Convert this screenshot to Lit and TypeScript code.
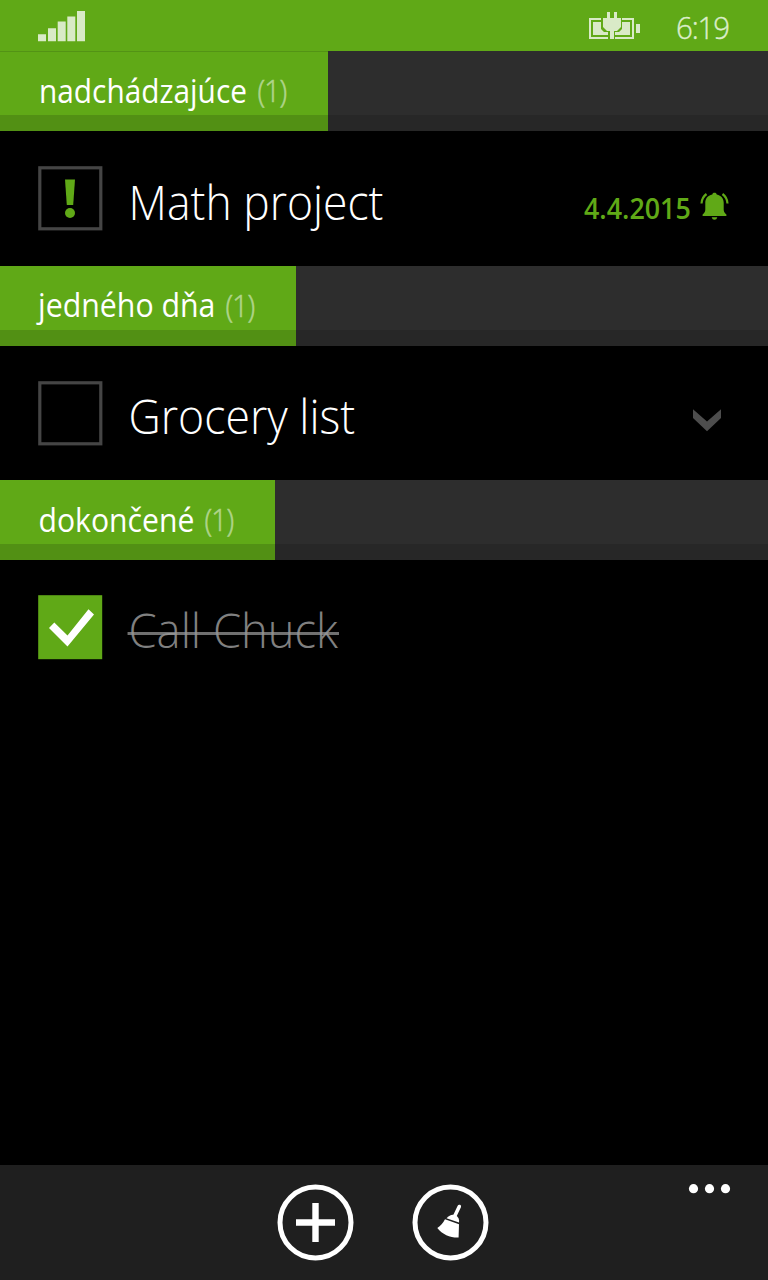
import { LitElement, html, css, svg } from "lit";
import { customElement, property } from "lit/decorators.js";

@customElement("status-bar")
class StatusBar extends LitElement {
  static styles = css`
    :host { display: flex; height: 51.2px; background: #60a917; }
    .signal { display: block; margin: 11px 0 0 38px; }
    .battery { display: block; margin: 12px 0 0 auto; }
    .clock {
      width: 54px; margin: 6px 38px 0 35px; white-space: nowrap;
      transform: scaleX(0.92); transform-origin: 0 0; -webkit-text-stroke: 0.4px #dceecb;
      font: 300 32px/42px "Open Sans", sans-serif; letter-spacing: -1.2px; color: #dceecb;
    }
  `;
  render() {
    return html`
      <svg class="signal" width="48" height="31" fill="#d9eac7">
        <path d="M0 23.3h8v7H0zM10 17.3h8v13h-8zM19.7 10.5h8v19.8h-8zM29.3 5.5h8v24.8h-8zM39 0h8v30.3h-8z" />
      </svg>
      <svg class="battery" width="52" height="28" fill="#d9eac7">
        <path d="M0 6h12v2H2v17h17v2H0zM33 6h12v21H26v-2h17V8H33z" />
        <path d="M4 10h8v7l3 3h4v3H4zM41 10h-8v7l-3 3h-4v3h15z" />
        <path d="M14 6h4V0h3v6h4V0h3v6h4v9l-4 4h-3v8h-4v-8h-3l-4-4z" />
        <path d="M47 12h4v9h-4z" />
      </svg>
      <div class="clock">6:19</div>
    `;
  }
}

@customElement("group-header")
class GroupHeader extends LitElement {
  @property() name = "";
  @property() kind = "";
  @property({ type: Number }) count = 0;
  static styles = css`
    :host { display: block; }
    .bar { display: flex; height: 80px; background: linear-gradient(#2d2d2d 0 64px, #272727 64px); }
    .tab {
      display: flex; box-sizing: border-box; height: 80px; padding: 19px 0 0 38px; white-space: nowrap;
      font: 400 32px/42px "Open Sans", sans-serif; color: #fff;
      background: linear-gradient(#60a917 0 64px, #529014 64px);
    }
    .name, .count { flex: none; transform-origin: 0 0; }
    .count {
      font-weight: 300; color: #b0d58c; letter-spacing: -1px;
      -webkit-text-stroke: 0.6px #b0d58c; transform: translate(0.5px, -1px) scaleX(0.88);
    }
    .upcoming .tab { width: 328px; box-shadow: inset 0 1px #539315; }
    .upcoming .name { width: 218.5px; transform: translateX(1px) scaleX(0.932); }
    .someday .tab { width: 296px; }
    .someday .name { width: 186.5px; transform: translateY(-0.6px) scaleX(0.947); }
    .done .tab { width: 275px; }
    .done .name { width: 165.5px; transform: translateX(0.5px) scaleX(0.942); }
  `;
  render() {
    return html`<div class="bar ${this.kind}">
      <div class="tab"><span class="name">${this.name}</span><span class="count">(${this.count})</span></div>
    </div>`;
  }
}

@customElement("task-row")
class TaskRow extends LitElement {
  @property() name = "";
  @property() kind = "";
  @property() date = "";
  static styles = css`
    :host { display: block; }
    .row { display: flex; height: 134.4px; }
    .box { display: block; margin: 35px 0 0 38px; flex: none; }
    .name {
      flex: none; margin: 37px 0 0 26px; height: 66px; white-space: nowrap; transform-origin: 0 0;
      font: 300 48px/66px "Open Sans", sans-serif; color: #fff;
    }
    .upcoming .name { transform: translate(-0.4px, 0.5px) scaleX(0.926); margin-right: -20px; }
    .someday .name { transform: translateX(-0.5px) scaleX(0.929); }
    .done .name { color: #808080; position: relative; transform: translateX(-0.5px) scaleX(0.944); }
    .done .name::after {
      content: ""; position: absolute; left: -1px; right: -1px; top: 35px; height: 3px;
      background: rgba(150, 150, 150, 0.75);
    }
    .date {
      margin: 57px 0 0 auto; width: 106px; white-space: nowrap;
      transform: translateY(0.6px) scaleX(0.942); transform-origin: 0 0;
      font: 600 28.5px/38px "Open Sans", sans-serif; color: #60a917;
    }
    .bell { display: block; margin: 61px 38px 0 10px; flex: none; }
    .arrow { display: block; margin: 63px 47px 0 auto; }
  `;
  mark() {
    if (this.kind === "done")
      return svg`<rect x=".2" y=".2" width="64" height="64" fill="#60a917"/><path d="M11 33L16.3 27.5 29.5 40.500 50.500 14.200 56 19.500 29.500 51.500z" fill="#fff"/>`;
    return svg`<rect x="1.8" y="1.8" width="61" height="61" fill="none" stroke="#454545" stroke-width="3.2"/>
      ${this.kind === "upcoming" ? svg`<path d="M27 13.5h10l-1.8 25.5h-6.4z" fill="#60a917"/><circle cx="32" cy="47" r="5" fill="#60a917"/>` : ""}`;
  }
  render() {
    return html`<div class="row ${this.kind}">
      <svg class="box" width="65" height="65">${this.mark()}</svg>
      <div class="name">${this.name}</div>
      ${this.date
        ? html`<div class="date">${this.date}</div>
            <svg class="bell" width="30" height="28" fill="#60a917">
              <path d="M14.500 .8c1.300 0 2 .6 2.200 1.600 4.800 1 7 4.300 7 8.400v6.700c0 2 .6 3 2.700 5V24H2.600v-1.500c2.100-2 2.700-3 2.700-5v-6.700c0-4.100 2.200-7.400 7-8.400C12.500 1.400 13.200 .8 14.500 .8zM11.700 25.200h5.600c-.4 1.700-1.400 2.500-2.800 2.500s-2.400-.8-2.800-2.500z" />
              <path d="M1.500 11.500C1.700 7.600 3.400 4.300 6.500 2M27.500 11.500C27.300 7.600 25.600 4.300 22.500 2" fill="none" stroke="#60a917" stroke-width="2.200" />
            </svg>`
        : ""}
      ${this.kind === "someday"
        ? html`<svg class="arrow" width="28" height="24"><path d="M0 .3L14 12.500 28 .3v8.700L14 22.300 0 9z" fill="#4d4d4d" /></svg>`
        : ""}
    </div>`;
  }
}

@customElement("app-bar")
class AppBar extends LitElement {
  static styles = css`
    :host { display: flex; height: 115px; background: #1f1f1f; }
    .round { display: block; margin-top: 19px; }
    .add { margin-left: 277px; }
    .clean { margin-left: 58px; }
    .more { display: block; margin: 18px 37px 0 auto; }
  `;
  render() {
    return html`
      <svg class="round add" width="77" height="77">
        <circle cx="38.500" cy="38.500" r="35.500" fill="none" stroke="#fff" stroke-width="5" />
        <path d="M35.300 19h6.400v16.300H58v6.400H41.700V58h-6.400V41.700H19v-6.400h16.300z" fill="#fff" />
      </svg>
      <svg class="round clean" width="77" height="77">
        <circle cx="38.500" cy="38.500" r="35.500" fill="none" stroke="#fff" stroke-width="5" />
        <path d="M47.300 22.500L42.300 33" stroke="#fff" stroke-width="3.600" stroke-linecap="round" />
        <path d="M34.500 34.300c2.800-3.300 5.800-4.300 8.800-3.100 3.200 1.300 4.200 4 3.700 7.400z" fill="#fff" />
        <path d="M33 35.300L47 40.200 46.600 53.500C38.500 53.800 30.500 50.800 25.300 44c3.300-2.100 5.700-5 7.700-8.700z" fill="#fff" />
      </svg>
      <svg class="more" width="43" height="12" fill="#fff">
        <circle cx="5.500" cy="5.700" r="4.600" /><circle cx="21.500" cy="5.700" r="4.600" /><circle cx="37.500" cy="5.700" r="4.600" />
      </svg>
    `;
  }
}

@customElement("app-root")
class AppRoot extends LitElement {
  static styles = css`
    :host { display: flex; flex-direction: column; width: 768px; height: 1280px; background: #000; overflow: hidden; }
    .list { flex: 1; }
    .group { height: 214.4px; }
  `;
  groups = [
    { kind: "upcoming", title: "nadchádzajúce", task: "Math project", date: "4.4.2015" },
    { kind: "someday", title: "jedného dňa", task: "Grocery list", date: "" },
    { kind: "done", title: "dokončené", task: "Call Chuck", date: "" },
  ];
  render() {
    return html`
      <status-bar></status-bar>
      <div class="list">
        ${this.groups.map(
          (g) => html`<div class="group">
            <group-header kind=${g.kind} name=${g.title} count="1"></group-header>
            <task-row kind=${g.kind} name=${g.task} date=${g.date}></task-row>
          </div>`
        )}
      </div>
      <app-bar></app-bar>
    `;
  }
}
